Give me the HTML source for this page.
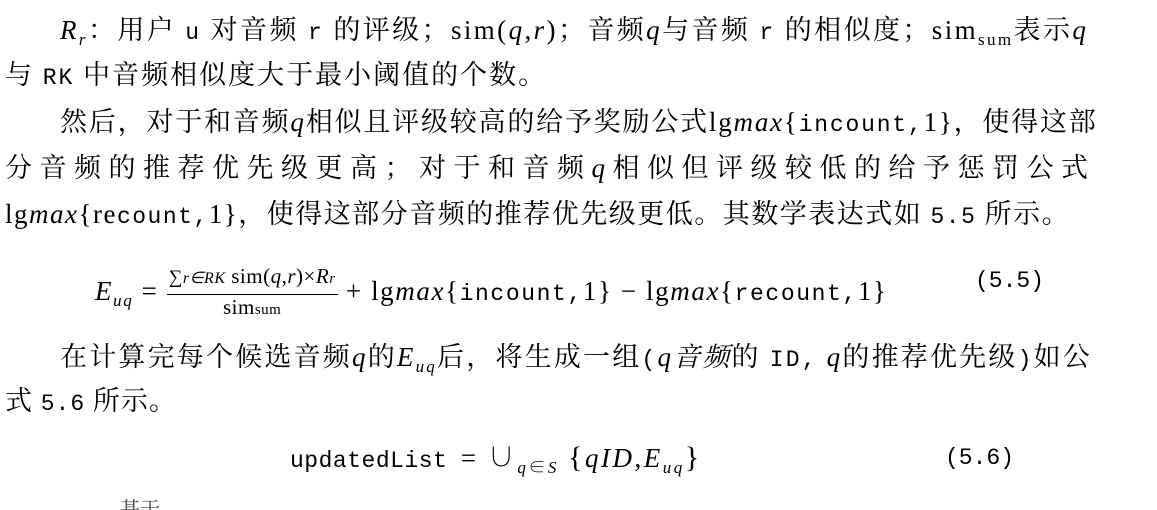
<!DOCTYPE html>
<html><head><meta charset="utf-8">
<style>
html,body{margin:0;padding:0;background:#fff;width:1157px;height:510px;overflow:hidden;position:relative;}
.l{position:absolute;white-space:nowrap;font-family:"Liberation Serif","Noto Serif CJK SC",serif;font-size:27px;line-height:32px;color:#000;}
.m{font-family:"Liberation Serif",serif;}
.t{font-family:"Liberation Mono",monospace;font-size:23px;}
i{font-family:"Liberation Serif",serif;font-style:italic;}
sub{font-size:17px;vertical-align:-6px;line-height:0;}
.frac{display:inline-block;vertical-align:-14px;text-align:center;font-size:21px;line-height:25px;letter-spacing:0.5px;}
.frac .n{border-bottom:1.5px solid #000;padding:0 2px 2px;}
</style></head><body>
<div class="l" style="left:60px;top:14px;letter-spacing:2.4px;"><i>R</i><sub><i>r</i></sub>：用户 <span class="t">u</span> 对音频 <span class="t">r</span> 的评级；<span class="m">sim(</span><i>q</i>,<i>r</i><span class="m">)</span>；音频<i>q</i>与音频 <span class="t">r</span> 的相似度；<span class="m">sim<sub>sum</sub></span>表示<i>q</i></div>
<div class="l" style="left:5px;top:59px;letter-spacing:2px;">与 <span class="t">RK</span> 中音频相似度大于最小阈值的个数。</div>
<div class="l" style="left:60px;top:106px;letter-spacing:1.8px;">然后，对于和音频<i>q</i>相似且评级较高的给予奖励公式<span class="m">lg</span><i>max</i><span class="m">{</span><span class="t">incount,</span><span class="m">1}</span>，使得这部</div>
<div class="l" style="left:5px;top:152px;letter-spacing:7.5px;">分音频的推荐优先级更高；对于和音频<i>q</i>相似但评级较低的给予惩罚公式</div>
<div class="l" style="left:5px;top:198px;letter-spacing:1.5px;"><span class="m">lg</span><i>max</i><span class="m">{re</span><span class="t">count,</span><span class="m">1}</span>，使得这部分音频的推荐优先级更低。其数学表达式如 <span class="t">5.5</span> 所示。</div>
<div class="l" style="left:95px;top:264px;letter-spacing:1.6px;"><i>E</i><sub><i>uq</i></sub> = <span class="frac"><div class="n"><span style="font-size:19px">∑</span><i style="font-size:16px">r∈RK</i> sim(<i>q</i>,<i>r</i>)×<i>R</i><i style="font-size:15px">r</i></div><div>sim<span style="font-size:15px">sum</span></div></span> + <span class="m">lg</span><i>max</i><span class="m">{</span><span class="t">incount,</span><span class="m">1}</span> − <span class="m">lg</span><i>max</i><span class="m">{</span><span class="t">recount,</span><span class="m">1}</span></div>
<div class="l t" style="left:975px;top:265px;font-size:23px;">(5.5)</div>
<div class="l" style="left:60px;top:339px;letter-spacing:2.2px;">在计算完每个候选音频<i>q</i>的<i>E</i><sub><i>uq</i></sub>后，将生成一组<span class="t">(</span><i>q</i><i style="font-family:'Noto Serif CJK SC',serif">音频</i>的 <span class="t">ID,</span> <i>q</i>的推荐优先级<span class="t">)</span>如公</div>
<div class="l" style="left:5px;top:385px;letter-spacing:1px;">式 <span class="t">5.6</span> 所示。</div>
<div class="l" style="left:290px;top:442px;"><span class="t" style="letter-spacing:0.5px">updatedList</span> &nbsp;<span style="letter-spacing:2.5px">= ∪<sub><i>q</i>∈<i>S</i></sub> <span style="font-size:30px">{</span><i>qID</i>,<i>E</i><sub><i>uq</i></sub><span style="font-size:30px">}</span></span></div>
<div class="l t" style="left:945px;top:442px;font-size:23px;">(5.6)</div>
<div class="l" style="left:120px;top:494px;font-size:20px;color:#444;">基于</div>
</body></html>
